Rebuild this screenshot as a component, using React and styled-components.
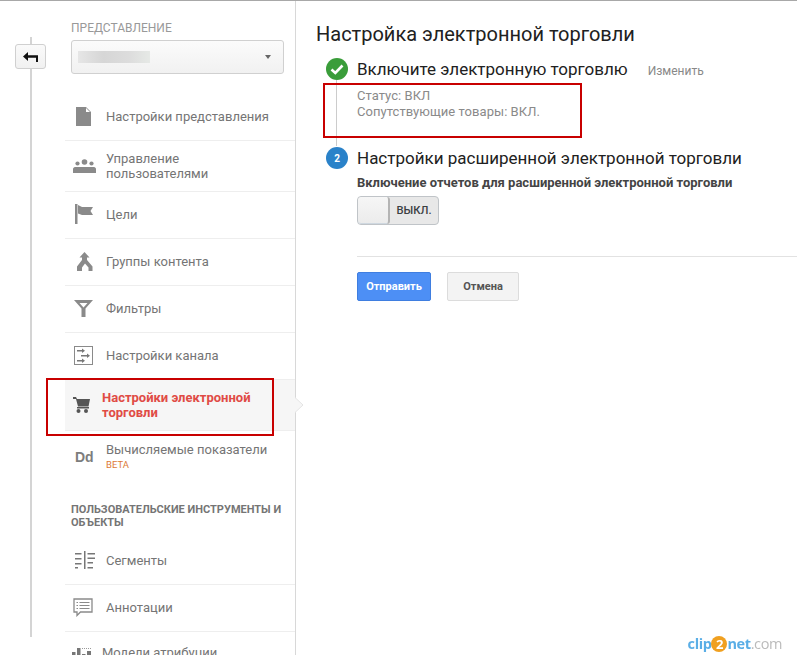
import React from "react";
import styled, { createGlobalStyle } from "styled-components";

const Global = createGlobalStyle`
  html, body { margin: 0; padding: 0; height: 655px; overflow: hidden; background: #fff; }
  body { font-family: Roboto, "Liberation Sans", sans-serif; }
  * { box-sizing: border-box; }
`;
const Page = styled.div`
  position: relative; display: flex; height: 655px; overflow: hidden;
  border-top: 1px solid #a8a8a8; background: #fff;
`;
const Rail = styled.div`flex: 0 0 65px; height: 636px; padding-top: 36px; display: flex;`;
const RailLine = styled.div`
  position: relative; margin-left: 30px; width: 2px; height: 600px; background: #d4d4d4;
`;
const BackButton = styled.button`
  position: absolute; left: -15px; top: 7px; width: 31px; height: 25px; padding: 0;
  display: flex; align-items: center; justify-content: center;
  background: linear-gradient(#fafafa, #f1f1f1); border: 1px solid #d0d0d0; border-radius: 3px;
`;
const Sidebar = styled.aside`
  flex: 0 0 231px; height: 654px; border-right: 1px solid #d8d8d8; overflow: hidden; position: relative;
`;
const ViewBlock = styled.div`padding: 20px 11px 20px 6px;`;
const ViewLabel = styled.div`font-size: 12px; line-height: 14px; color: #999; margin-bottom: 5px;`;
const Select = styled.div`
  height: 34px; border: 1px solid #d0d0d0; border-radius: 3px; padding: 0 12px 0 6px;
  background: linear-gradient(#fbfbfb, #f1f1f1);
  display: flex; align-items: center; justify-content: space-between;
`;
const Blurred = styled.div`
  width: 72px; height: 12px; background: linear-gradient(90deg, #e6e6e6, #d6d6d6 35%, #dcdcdc 70%, #e6e9e6);
`;
const Caret = styled.div`
  width: 0; height: 0; border-left: 3.5px solid transparent; border-right: 3.5px solid transparent;
  border-top: 4px solid #666;
`;
const Row = styled.div`
  position: relative; display: flex; align-items: center; min-height: ${p => p.$height}px;
  padding: ${p => p.$height > 47 ? "10px 0" : "9px 0 11px"};
  border-bottom: ${p => p.$plain ? "none" : "1px solid #eee"};
  background: ${p => p.$active ? "#f6f6f6" : "transparent"};
`;
const IconSlot = styled.div`
  flex: 0 0 ${p => p.$compact ? 37 : 41}px; display: flex; align-items: center; padding-left: ${p => p.$pad}px;
`;
const RowText = styled.div`
  font-size: 13px; line-height: 15px; color: ${p => p.$active ? "#e04b45" : "#757575"};
  font-weight: ${p => p.$active ? 700 : 400};
`;
const Beta = styled.div`font-size: 9.5px; line-height: 15px; color: #dd7a36;`;
const Dd = styled.span`font-size: 14px; line-height: 16px; font-weight: 700; color: #7d7d7d; font-family: "Liberation Sans", sans-serif;`;
const PointerMark = styled.svg`position: absolute; left: 295px; top: 396px;`;
const SectionTitle = styled.div`
  padding: 21px 11px 9px 6px; font-size: 11px; line-height: 13px; font-weight: 700; color: #757575;
`;
const Main = styled.main`flex: 1; min-width: 0; padding: 21px 0 0 20px;`;
const Title = styled.h1`
  margin: 0 0 11px; font-size: 20px; line-height: 24px; font-weight: 400; color: #212121;
`;
const Step = styled.section`display: flex; margin-left: 10px; gap: 9px;`;
const Marker = styled.div`flex: 0 0 22px; display: flex; flex-direction: column; align-items: center; padding-top: 1px;`;
const Circle = styled.div`
  width: 22px; height: 22px; border-radius: 50%; flex: none;
  display: flex; align-items: center; justify-content: center;
  background: ${p => p.$color}; color: #fff; font-size: 10px; font-weight: 700;
`;
const Connector = styled.div`flex: 1; width: 1px; margin-right: 1px; background: #ccc;`;
const StepBody = styled.div`flex: 1; min-width: 0;`;
const StepHead = styled.div`display: flex; align-items: baseline; gap: 20px; height: 24px;`;
const StepTitle = styled.h2`margin: 0; font-size: 17px; line-height: 24px; font-weight: 400; color: #212121;`;
const Edit = styled.a`font-size: 12px; color: #888;`;
const Status = styled.div`padding: 7px 0 26px; font-size: 13px; line-height: 16px; letter-spacing: 0.05px; color: #8a8a8a;`;
const OptionLabel = styled.div`margin-top: 5px; font-size: 13px; line-height: 16px; font-weight: 700; color: #444;`;
const Toggle = styled.div`
  margin-top: 5px; width: 82px; height: 29px; display: flex; border: 1px solid #c0c4c8; border-radius: 4px;
  background: #e8e8e8; overflow: hidden;
`;
const Thumb = styled.div`
  flex: 0 0 32px; background: linear-gradient(#f6f6f6, #ebebeb); border-right: 2px solid #b4b4b4;
  border-radius: 3px; box-shadow: inset 0 -1px 0 #cfd8e0;
`;
const ToggleText = styled.div`
  flex: 1; text-align: center; font-size: 11.2px; line-height: 27px; font-weight: 500; color: #3c4043;
`;
const Divider = styled.hr`margin: 31px 0 15px 41px; border: 0; border-top: 1px solid #e2e2e2;`;
const Actions = styled.div`display: flex; gap: 16px; margin-left: 41px;`;
const Button = styled.button`
  width: ${p => p.$w}px; height: 29px; padding: 0; font: 700 11px Roboto, sans-serif; border-radius: 2px;
  color: ${p => p.$primary ? "#fff" : "#555"};
  background: ${p => p.$primary ? "#4d8ff5" : "#f3f3f3"};
  border: 1px solid ${p => p.$primary ? "#3f7ee0" : "#dcdcdc"};
`;
const Annotation = styled.div`
  position: absolute; left: ${p => p.$x}px; top: ${p => p.$y}px; width: ${p => p.$w}px; height: ${p => p.$h}px;
  border: 2px solid #c80000; pointer-events: none;
`;
const Logo = styled.div`
  position: absolute; right: 15px; top: 634px; display: flex; align-items: center;
  font: 700 14.5px/18px "Open Sans", sans-serif; letter-spacing: -0.4px; color: #5aaee6; filter: blur(0.5px);
`;
const LogoTwo = styled.span`
  width: 16px; height: 16px; border-radius: 50%; background: #f0a020; color: #fff;
  display: inline-flex; align-items: center; justify-content: center; font-size: 13px;
`;
const LogoDim = styled.span`color: #bbb; font-weight: 400;`;

const G = "#8a8a8a";
const icons = {
  file: <svg width="15" height="19" viewBox="0 0 15 19"><path fill={G} d="M0 0h10l5 5v14H0z"/><path fill="#fff" d="M10 1v4h4z"/></svg>,
  users: <svg width="23" height="14" viewBox="0 0 23 14"><g fill={G}><circle cx="4.500" cy="4.500" r="2.100"/><circle cx="11.500" cy="3" r="2.800"/><circle cx="18.500" cy="4.500" r="2.100"/><path d="M0 14v-4c0-1 1-2 2-2h19c1 0 2 1 2 2v4z"/></g></svg>,
  flag: <svg width="19" height="20" viewBox="0 0 19 20"><path fill={G} d="M0 0h2.500v20H0zM3 1l4 2h11l-2.500 4 2.500 4H7l-4-1.500z"/></svg>,
  merge: <svg width="16" height="19" viewBox="0 0 16 19"><path fill={G} d="M7.500 0l5 5.500H10V8l5.500 6.500V19h-4v-3.500L8 11.500 5 15.500V19H0v-4.500L5 8V5.500H2.500z"/></svg>,
  filter: <svg width="19" height="17" viewBox="0 0 19 17"><path fill={G} fillRule="evenodd" d="M0 0h19l-7.500 8.500V17h-4V8.500zM5.500 3l4 4.500 4-4.500z"/></svg>,
  channel: <svg width="19" height="19" viewBox="0 0 19 19"><rect x=".5" y=".5" width="18" height="18" fill="#fff" stroke={G}/><g fill="#777"><path d="M3 4h5V2.500L11 4.700 8 7V5.500H3zM7 9h6V7.500l3 2.200-3 2.300v-1.500H7zM3 14h5v-1.500l3 2.200L8 17v-1.500H3z"/></g></svg>,
  cart: <svg width="17" height="16" viewBox="0 0 17 16"><g fill="#555"><path d="M0 0h3l1 2h13l-1.500 7.500H5L3 2H0z"/><circle cx="5.500" cy="14" r="2"/><circle cx="13" cy="14" r="2"/><path d="M4 10h12v1.500H4z"/></g></svg>,
  segments: <svg width="20" height="18" viewBox="0 0 20 18"><path fill="#777" d="M9 0h1.500v18H9zM0 2h6.500v1.500H0zM0 7h6.500v1.500H0zM0 12h6.500v1.500H0zM0 16h3v1.500H0zM12.500 2H20v1.500h-7.500zM12.500 6.500H20V8h-7.500zM12.500 11H18v1.500h-5.500zM12.500 16H18v1.500h-5.500z"/></svg>,
  note: <svg width="20" height="19" viewBox="0 0 20 19"><path fill="#fff" stroke={G} strokeWidth="1.300" d="M1 1h18v13H7.500L4 17.500V14H1z"/><path stroke={G} strokeWidth="1.200" d="M6.500 4.500h10M6.500 7.500h10M6.500 10.500h10M3.500 4.500h1.500M3.500 7.500h1.500M3.500 10.500h1.500"/></svg>,
  models: <svg width="19" height="11" viewBox="0 0 19 11"><path fill="#777" d="M0 5h3.500v6H0zM5 1h3.500v10H5zM10 7h3.500v4H10zM15 4h4v7h-4z"/><path stroke="#999" strokeDasharray="1 1" d="M10 1.500h9"/></svg>,
};

const Item = ({ icon, pad = 0, compact, active, plain, height = 47, children }) => (
  <Row $active={active} $plain={plain} $height={height}>
    <IconSlot $compact={compact} $pad={pad}>{icon}</IconSlot>
    <RowText $active={active}>{children}</RowText>
  </Row>
);

export default function App() {
  return (
    <Page>
      <Global />
      <Rail>
        <RailLine>
          <BackButton aria-label="Назад">
            <svg width="15" height="10" viewBox="0 0 15 10"><path fill="#111" d="M0 4.500L5 0v3.300h10V10h-2V5.700H5V9z"/></svg>
          </BackButton>
        </RailLine>
      </Rail>
      <Sidebar>
        <ViewBlock>
          <ViewLabel>ПРЕДСТАВЛЕНИЕ</ViewLabel>
          <Select><Blurred /><Caret /></Select>
        </ViewBlock>
        <Item icon={icons.file} pad={11}>Настройки представления</Item>
        <Item icon={icons.users} pad={8} height={51}>Управление<br />пользователями</Item>
        <Item icon={icons.flag} pad={10}>Цели</Item>
        <Item icon={icons.merge} pad={12}>Группы контента</Item>
        <Item icon={icons.filter} pad={9}>Фильтры</Item>
        <Item icon={icons.channel} pad={9}>Настройки канала</Item>
        <Item icon={icons.cart} pad={8} compact active height={51}>Настройки электронной<br />торговли</Item>
        <Item icon={<Dd>Dd</Dd>} pad={10} plain height={51}>
          Вычисляемые показатели
          <Beta>BETA</Beta>
        </Item>
        <SectionTitle>ПОЛЬЗОВАТЕЛЬСКИЕ ИНСТРУМЕНТЫ И ОБЪЕКТЫ</SectionTitle>
        <Item icon={icons.segments} pad={10}>Сегменты</Item>
        <Item icon={icons.note} pad={8}>Аннотации</Item>
        <Item icon={icons.models} pad={7} compact plain height={43}>Модели атрибуции</Item>
      </Sidebar>
      <Main>
        <Title>Настройка электронной торговли</Title>
        <Step>
          <Marker>
            <Circle $color="#3a9d3a">
              <svg width="14" height="11" viewBox="0 0 14 11"><path fill="none" stroke="#fff" strokeWidth="2.600" d="M1.500 5.500l3.800 3.500L12.500 1.500"/></svg>
            </Circle>
            <Connector />
          </Marker>
          <StepBody>
            <StepHead>
              <StepTitle>Включите электронную торговлю</StepTitle>
              <Edit>Изменить</Edit>
            </StepHead>
            <Status>Статус: ВКЛ<br />Сопутствующие товары: ВКЛ.</Status>
          </StepBody>
        </Step>
        <Step>
          <Marker><Circle $color="#2a82c9">2</Circle></Marker>
          <StepBody>
            <StepTitle>Настройки расширенной электронной торговли</StepTitle>
            <OptionLabel>Включение отчетов для расширенной электронной торговли</OptionLabel>
            <Toggle><Thumb /><ToggleText>ВЫКЛ.</ToggleText></Toggle>
          </StepBody>
        </Step>
        <Divider />
        <Actions>
          <Button $primary $w={74}>Отправить</Button>
          <Button $w={72}>Отмена</Button>
        </Actions>
      </Main>
      <PointerMark width="9" height="16" viewBox="0 0 9 16">
        <path fill="#f6f6f6" stroke="#e4e4e4" d="M0 0.500l8 7.500-8 7.500"/>
      </PointerMark>
      <Annotation $x={323} $y={82} $w={259} $h={55} />
      <Annotation $x={46} $y={377} $w={228} $h={58} />
      <Logo>clip<LogoTwo>2</LogoTwo>net<LogoDim>.com</LogoDim></Logo>
    </Page>
  );
}
